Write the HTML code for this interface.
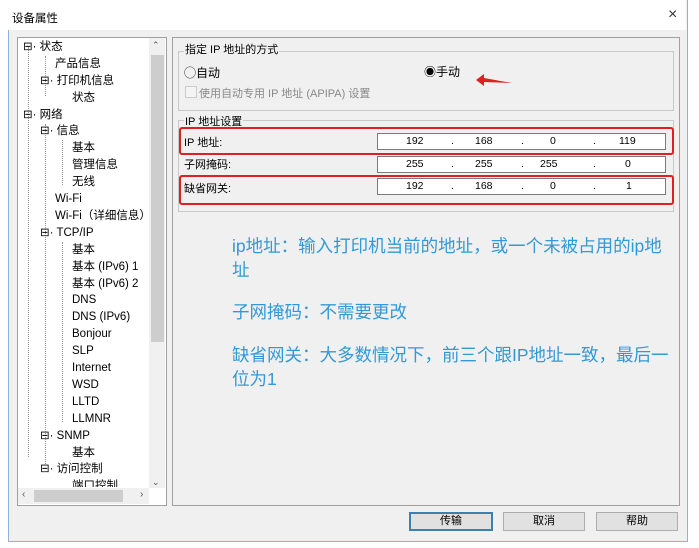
<!DOCTYPE html><html><head><meta charset="utf-8"><style>
body{margin:0;width:699px;height:548px;background:#fff;position:relative;overflow:hidden;font-family:"Liberation Sans","Noto Sans CJK SC",sans-serif;font-size:11px;color:#000}
.a{position:absolute}
.win{left:8px;top:0;width:678px;height:541px;border:1px solid #8ab4d8;border-top:none;background:#f0f0f0}
.title{left:8px;top:0;width:678px;height:30px;background:#fff}
.tree{left:17px;top:37px;width:148px;height:467px;background:#fff;border:1px solid #a0a0a0}
.ti{position:absolute;white-space:nowrap;font-size:11.5px;line-height:14px}
.box{border:1px solid #c8c8c8}
.inp{background:#fff;border:1px solid #7a7a7a;height:15px}
.red{border:2px solid #e02020;border-radius:3px}
.btn{background:#e1e1e1;border:1px solid #adadad;height:17px;text-align:center;line-height:17px}
.blue{color:#3399d6;font-size:17.5px;line-height:24px;white-space:nowrap}
.n{position:absolute;top:0;font-size:10.5px;line-height:15px}
</style></head><body>
<div class="a win"></div>
<div class="a title"></div>
<div class="a" style="left:12px;top:10px;font-size:11.5px">设备属性</div>
<div class="a" style="left:668px;top:6px;font-size:16px;color:#333">×</div>
<div class="a tree"></div>
<div class="a" style="left:28px;top:47px;width:0;height:410px;border-left:1px dotted #999"></div>
<div class="a" style="left:45px;top:56px;width:0;height:40px;border-left:1px dotted #999"></div>
<div class="a" style="left:45px;top:124px;width:0;height:340px;border-left:1px dotted #999"></div>
<div class="a" style="left:62px;top:140px;width:0;height:45px;border-left:1px dotted #999"></div>
<div class="a" style="left:62px;top:242px;width:0;height:180px;border-left:1px dotted #999"></div>
<div class="a" style="left:17px;top:37px;width:130px;height:450px">
<div class="ti" style="left:6px;top:3px">⊟· 状态</div>
<div class="ti" style="left:38px;top:20px">产品信息</div>
<div class="ti" style="left:23px;top:37px">⊟· 打印机信息</div>
<div class="ti" style="left:55px;top:54px">状态</div>
<div class="ti" style="left:6px;top:71px">⊟· 网络</div>
<div class="ti" style="left:23px;top:87px">⊟· 信息</div>
<div class="ti" style="left:55px;top:104px">基本</div>
<div class="ti" style="left:55px;top:121px">管理信息</div>
<div class="ti" style="left:55px;top:138px">无线</div>
<div class="ti" style="left:38px;top:155px">Wi-Fi</div>
<div class="ti" style="left:38px;top:172px">Wi-Fi（详细信息）</div>
<div class="ti" style="left:23px;top:189px">⊟· TCP/IP</div>
<div class="ti" style="left:55px;top:206px">基本</div>
<div class="ti" style="left:55px;top:223px">基本 (IPv6) 1</div>
<div class="ti" style="left:55px;top:240px">基本 (IPv6) 2</div>
<div class="ti" style="left:55px;top:256px">DNS</div>
<div class="ti" style="left:55px;top:273px">DNS (IPv6)</div>
<div class="ti" style="left:55px;top:290px">Bonjour</div>
<div class="ti" style="left:55px;top:307px">SLP</div>
<div class="ti" style="left:55px;top:324px">Internet</div>
<div class="ti" style="left:55px;top:341px">WSD</div>
<div class="ti" style="left:55px;top:358px">LLTD</div>
<div class="ti" style="left:55px;top:375px">LLMNR</div>
<div class="ti" style="left:23px;top:392px">⊟· SNMP</div>
<div class="ti" style="left:55px;top:409px">基本</div>
<div class="ti" style="left:23px;top:425px">⊟· 访问控制</div>
<div class="ti" style="left:55px;top:442px;height:8px;overflow:hidden">端口控制</div>
</div>
<div class="a" style="left:149px;top:38px;width:16px;height:450px;background:#f0f0f0"></div>
<div class="a" style="left:151px;top:55px;width:13px;height:287px;background:#cdcdcd"></div>
<div class="a" style="left:152px;top:40px;font-size:9px;color:#555">⌃</div>
<div class="a" style="left:152px;top:477px;font-size:9px;color:#555">⌄</div>
<div class="a" style="left:18px;top:488px;width:131px;height:16px;background:#f0f0f0"></div>
<div class="a" style="left:34px;top:490px;width:89px;height:12px;background:#cdcdcd"></div>
<div class="a" style="left:22px;top:489px;font-size:10px;color:#555">‹</div>
<div class="a" style="left:140px;top:489px;font-size:10px;color:#555">›</div>
<div class="a" style="left:172px;top:37px;width:506px;height:467px;border:1px solid #a0a0a0;background:#f0f0f0"></div>
<div class="a box" style="left:178px;top:51px;width:494px;height:58px"></div>
<div class="a" style="left:184px;top:41px;background:#f0f0f0;padding:0 1px">指定 IP 地址的方式</div>
<div class="a" style="left:184px;top:64px;font-size:12px">◯自动</div>
<div class="a" style="left:424px;top:63px;font-size:12px">◉手动</div>
<svg class="a" style="left:474px;top:73px" width="40" height="16"><path d="M38 10 L10 5 L10 1 L2 7 L10 13 L10 9 Z" fill="#e02020"/></svg>
<div class="a" style="left:185px;top:86px;width:10px;height:10px;border:1px solid #ccc;background:#f4f4f4"></div>
<div class="a" style="left:199px;top:85px;color:#888">使用自动专用 IP 地址 (APIPA) 设置</div>
<div class="a box" style="left:178px;top:120px;width:494px;height:90px"></div>
<div class="a" style="left:184px;top:113px;background:#f0f0f0;padding:0 1px">IP 地址设置</div>
<div class="a red" style="left:179px;top:127px;width:491px;height:24px"></div>
<div class="a red" style="left:179px;top:175px;width:491px;height:26px"></div>
<div class="a" style="left:184px;top:134px">IP 地址:</div>
<div class="a" style="left:184px;top:156px">子网掩码:</div>
<div class="a" style="left:184px;top:180px">缺省网关:</div>
<div class="a inp" style="left:377px;top:133px;width:287px"><span class="n" style="left:28px">192</span><span class="n" style="left:73px">.</span><span class="n" style="left:97px">168</span><span class="n" style="left:143px">.</span><span class="n" style="left:172px">0</span><span class="n" style="left:215px">.</span><span class="n" style="left:241px">119</span></div>
<div class="a inp" style="left:377px;top:156px;width:287px"><span class="n" style="left:28px">255</span><span class="n" style="left:73px">.</span><span class="n" style="left:97px">255</span><span class="n" style="left:143px">.</span><span class="n" style="left:162px">255</span><span class="n" style="left:215px">.</span><span class="n" style="left:247px">0</span></div>
<div class="a inp" style="left:377px;top:178px;width:287px"><span class="n" style="left:28px">192</span><span class="n" style="left:73px">.</span><span class="n" style="left:97px">168</span><span class="n" style="left:143px">.</span><span class="n" style="left:172px">0</span><span class="n" style="left:215px">.</span><span class="n" style="left:248px">1</span></div>
<div class="a blue" style="left:232px;top:234px">ip地址：输入打印机当前的地址，或一个未被占用的ip地</div>
<div class="a blue" style="left:232px;top:258px">址</div>
<div class="a blue" style="left:232px;top:300px">子网掩码：不需要更改</div>
<div class="a blue" style="left:232px;top:343px">缺省网关：大多数情况下，前三个跟IP地址一致，最后一</div>
<div class="a blue" style="left:232px;top:367px">位为1</div>
<div class="a btn" style="left:409px;top:512px;width:80px;border:2px solid #3c7fb1;height:15px;line-height:15px">传输</div>
<div class="a btn" style="left:503px;top:512px;width:80px">取消</div>
<div class="a btn" style="left:596px;top:512px;width:80px">帮助</div>
</body></html>
